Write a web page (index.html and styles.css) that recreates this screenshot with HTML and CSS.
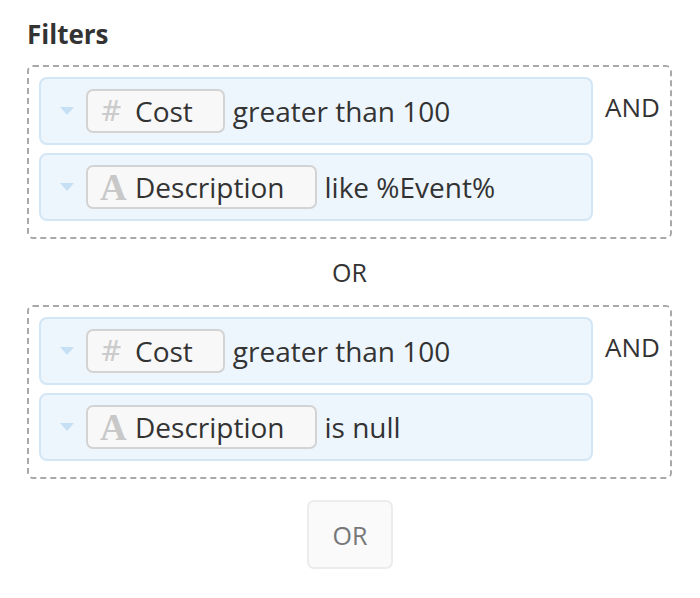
FILE: index.html
```html
<!DOCTYPE html>
<html>
<head>
<meta charset="utf-8">
<link rel="stylesheet" href="styles.css">
</head>
<body>
<div class="page">
  <h2 class="title">Filters</h2>
  <div class="group">
    <div class="rows">
      <div class="row">
        <span class="caret"></span>
        <span class="pill"><span class="icon hash">#</span><span class="name">Cost</span></span>
        <span class="cond">greater than 100</span>
      </div>
      <div class="row">
        <span class="caret"></span>
        <span class="pill"><span class="icon letter">A</span><span class="name">Description</span></span>
        <span class="cond">like %Event%</span>
      </div>
    </div>
    <div class="op">AND</div>
  </div>
  <div class="or-label">OR</div>
  <div class="group">
    <div class="rows">
      <div class="row">
        <span class="caret"></span>
        <span class="pill"><span class="icon hash">#</span><span class="name">Cost</span></span>
        <span class="cond">greater than 100</span>
      </div>
      <div class="row">
        <span class="caret"></span>
        <span class="pill"><span class="icon letter">A</span><span class="name">Description</span></span>
        <span class="cond">is null</span>
      </div>
    </div>
    <div class="op">AND</div>
  </div>
  <div class="actions">
    <button class="or-btn">OR</button>
  </div>
</div>
</body>
</html>
```
FILE: styles.css
```css
html, body {
  margin: 0;
  padding: 0;
  background: #ffffff;
}
.page {
  font-family: "Open Sans", "Liberation Sans", sans-serif;
  color: #333333;
  padding: 17px 28px 0 27px;
  font-size: 25px;
}
.title {
  font-size: 26px;
  font-weight: 700;
  margin: 0 0 14px 0;
  line-height: 34px;
  color: #333333;
}
.group {
  display: flex;
  align-items: flex-start;
  gap: 12px;
  border: 2px dashed #a9a9a9;
  border-radius: 6px;
  padding: 10px 12px 16px 10px;
}
.rows {
  flex: 1;
  display: flex;
  flex-direction: column;
  gap: 8px;
}
.row {
  display: flex;
  align-items: center;
  height: 44px;
  padding: 10px 12px 10px 19px;
  border: 2px solid #d2e6f6;
  background: #eef6fd;
  border-radius: 8px;
  font-size: 28px;
}
.caret {
  width: 0;
  height: 0;
  border-left: 7.5px solid transparent;
  border-right: 7.5px solid transparent;
  border-top: 8px solid #c6dff3;
  margin-right: 12px;
}
.pill {
  display: flex;
  align-items: center;
  height: 40px;
  padding: 0 30px 0 12px;
  border: 2px solid #d3d3d3;
  background: #f8f8f8;
  border-radius: 7px;
  margin-right: 8px;
}
.icon {
  width: 35px;
  color: #c8c8c8;
  font-family: "Liberation Serif", "DejaVu Serif", serif;
  line-height: 1;
}
.hash {
  font-family: "DejaVu Serif", "Liberation Serif", serif;
  font-size: 27px;
  color: #cbcbcb;
}
.letter {
  font-size: 37px;
  font-weight: 700;
}
.name {
  line-height: 1;
}
.cond {
  line-height: 1;
}
.op {
  margin-top: 17px;
  line-height: 1;
  font-size: 26px;
  width: 53px;
}
.or-label {
  text-align: center;
  height: 66px;
  line-height: 66px;
}
.actions {
  display: flex;
  justify-content: center;
  padding-top: 21px;
}
.or-btn {
  width: 86px;
  height: 69px;
  border: 2px solid #ececec;
  background: #fafafa;
  border-radius: 7px;
  font-family: "Open Sans", "Liberation Sans", sans-serif;
  font-size: 25px;
  color: #777777;
  padding: 0;
  margin-left: 1px;
}
```
